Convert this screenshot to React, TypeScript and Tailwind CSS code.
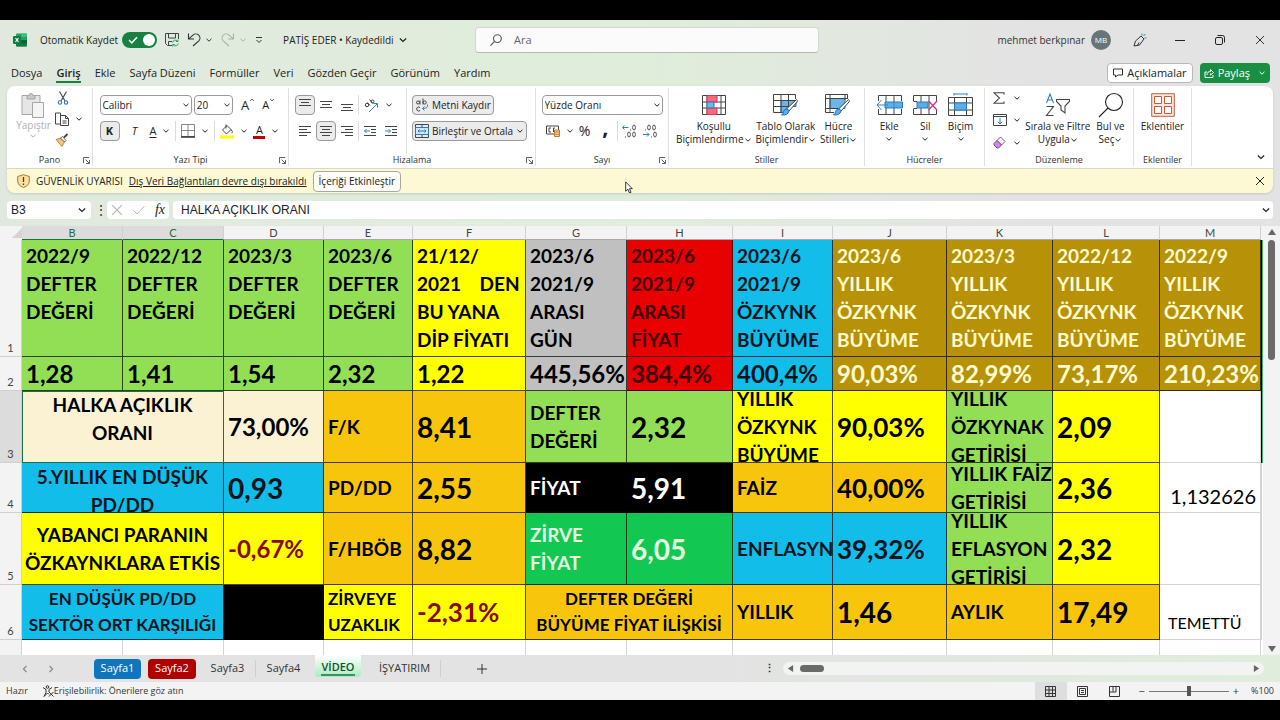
import React, { useState } from 'react';
import clsx from 'clsx';

type IconProps = { className?: string };

/* ---------- Icons ---------- */

const Chevron: React.FC<IconProps> = ({ className }) => (
  <svg viewBox="0 0 8 8" className={clsx('shrink-0 fill-none stroke-current', className ?? 'size-2')} strokeWidth="1">
    <path d="M1.500 2.800 4 5.200 6.500 2.800" />
  </svg>
);

const ExcelLogo = () => (
  <svg viewBox="0 0 14 14" className="size-3.5">
    <rect x="3" y="0.5" width="11" height="13" rx="1" fill="#21a366" />
    <path d="M3 7h11v5.500a1 1 0 0 1-1 1H4a1 1 0 0 1-1-1z" fill="#107c41" />
    <path d="M8.500 .500H13a1 1 0 0 1 1 1V4H8.500z" fill="#33c481" />
    <path d="M8.500 7H14v3.500H8.500z" fill="#185c37" />
    <rect x="0" y="3" width="8" height="8" rx="1" fill="#107c41" />
    <path d="M2.500 5 5.500 9M5.500 5 2.500 9" stroke="#fff" strokeWidth="1.100" />
  </svg>
);

const SaveIcon = () => (
  <svg viewBox="0 0 14 14" className="size-3.5 fill-none" stroke="#444" strokeWidth="1">
    <path d="M7 12.500H2.500L.500 10.500V.500h13V6M3.500 .500V5h7V.500M3.500 12.500V8.500H7" />
    <path d="M7.500 9.500a3 3 0 0 1 5-1.500M13 6.500v2h-2M13.300 10.500a3 3 0 0 1-5 1.500M7.700 13.500v-2h2" stroke="#2ea05c" />
  </svg>
);

const UndoIcon: React.FC<IconProps> = ({ className }) => (
  <svg viewBox="0 0 14 14" className={clsx('size-3.5 fill-none stroke-current', className)} strokeWidth="1.1">
    <path d="M1.500 .500V6H7M1.700 5.800 6 2.200A4 4 0 0 1 11.800 7.800L6 13" />
  </svg>
);

const SearchIcon: React.FC<IconProps> = ({ className }) => (
  <svg viewBox="0 0 26 26" className={clsx('shrink-0 fill-none stroke-current', className)} strokeWidth="1.1">
    <circle cx="16" cy="10" r="8.500" vectorEffect="non-scaling-stroke" />
    <path d="M10 16 1 25" vectorEffect="non-scaling-stroke" />
  </svg>
);

const PenIcon = () => (
  <svg viewBox="0 0 14 14" className="size-3.5 fill-none" stroke="#333" strokeWidth="1">
    <path d="M1 13 2.500 8 8 3l3 3-4.500 6zM4.500 12.500 6 9.500" />
    <path d="M9 2.500V.500M10.500 3 12.500 1M11.500 5h2" stroke="#2a8a8a" />
  </svg>
);

const CommentIcon = () => (
  <svg viewBox="0 0 10 10" className="size-2.5 fill-none" stroke="#333" strokeWidth="1">
    <path d="M.500 1h9v6H5L2.500 9V7h-2z" />
  </svg>
);

const ShareIcon = () => (
  <svg viewBox="0 0 10 10" className="size-2.5 fill-none" stroke="#fff" strokeWidth="1">
    <path d="M3 4H1v5.500h8V7M3 7c0-2.500 1.500-3.500 3.500-3.500V1.500L9.500 4.500 6.500 7V5.500" />
  </svg>
);

const PasteIcon = () => (
  <svg viewBox="0 0 24 26" className="h-[26px] w-6" fill="#e6e6e6" stroke="#a6a6a6">
    <path d="M1 3.500h18v19H1z" />
    <path d="M6 3.500h2a2 2 0 0 1 4 0h2V7H6z" fill="#c8c8c8" />
    <path d="M11.500 10.500h11v15h-11z" fill="#f4f4f4" />
  </svg>
);

const CutIcon = () => (
  <svg viewBox="0 0 12 14" className="h-3.5 w-3 fill-none" strokeWidth="1.1">
    <path d="M2.500 .500 8 10M9.500 .500 4 10" stroke="#444" />
    <circle cx="3" cy="11.500" r="1.700" stroke="#2b7cb3" />
    <circle cx="9" cy="11.500" r="1.700" stroke="#2b7cb3" />
  </svg>
);

const CopyIcon = () => (
  <svg viewBox="0 0 14 14" className="size-3.5 fill-white" stroke="#444">
    <path d="M.500 1h5v11h-5z" />
    <path d="M5.500 3.500h5l3 3v7h-8zM10.500 3.500v3h3M7.500 9h4M7.500 11h4" />
  </svg>
);

const BrushIcon = () => (
  <svg viewBox="0 0 14 14" className="size-3.5">
    <path d="M1 6.500 6 5l3.500 4L7 13.500z" fill="#f4c27c" stroke="#b5762a" strokeWidth=".8" />
    <path d="m5.500 5 2-1.500 3.500 4L9.500 9z" fill="#fff" stroke="#444" strokeWidth=".8" />
    <path d="m9 4.500 3.500-3.500" stroke="#444" strokeWidth="1.800" />
  </svg>
);

const BorderIcon = () => (
  <svg viewBox="0 0 14 14" className="size-3.5 fill-none" stroke="#888">
    <path d="M.500 .500h13v12H.500zM7 .500v12M.500 6.500h13" />
    <path d="M0 13h14" stroke="#333" strokeWidth="1.300" />
  </svg>
);

const FillIcon = () => (
  <svg viewBox="0 0 14 15" className="h-[15px] w-3.5 fill-none" stroke="#444">
    <path d="m2.500 6 4.500-4.500L11 5.500 6.500 10zM6 .500v4M11 5.500q2 2 1 3.500" />
    <path d="M0 13h14" stroke="#ffff00" strokeWidth="3" />
  </svg>
);

const Lines: React.FC<{ d: string }> = ({ d }) => (
  <svg viewBox="0 0 14 14" className="size-3.5" stroke="#444">
    <path d={d} />
  </svg>
);

const IndentIcon: React.FC<{ out?: boolean }> = ({ out }) => (
  <svg viewBox="0 0 14 14" className="size-3.5 fill-none" stroke="#444">
    <path d="M1 2.500h12M8 5.500h5M8 8.500h5M1 11.500h12" />
    <path d={out ? 'M7 7H1.500M3.500 5l-2 2 2 2' : 'M1 7h5.500M4.500 5l2 2-2 2'} stroke="#2b88b8" />
  </svg>
);

const OrientIcon = () => (
  <svg viewBox="0 0 15 15" className="size-[15px] fill-none" stroke="#444">
    <circle cx="3" cy="7" r="1.700" />
    <path d="M3.500 4.500 6 7.500M5.500 1.500 9 5.500" />
    <circle cx="8.500" cy="3.500" r="1.500" />
    <path d="M5 14 13 6M9.500 5.500H13.500V9.500" stroke="#2b88a8" />
  </svg>
);

const WrapIcon = () => (
  <svg viewBox="0 0 14 14" className="size-3.5 shrink-0 fill-none" stroke="#444">
    <circle cx="3" cy="4.500" r="1.500" />
    <path d="M5 2.500V6.500M8 .500v6" />
    <circle cx="9.700" cy="4.500" r="1.600" />
    <path d="M5 9.500a2 2 0 1 0 0 3" />
    <path d="M12.500 6.500q1 4-5 4M9.500 8.500l-2 2 2 2" stroke="#2b88b8" />
  </svg>
);

const MergeIcon = () => (
  <svg viewBox="0 0 14 14" className="size-3.5 shrink-0 fill-none">
    <path d="M.500 .500h13v13H.500zM7 .500V3M7 11v2.500" stroke="#444" />
    <path d="M.500 3.500h13v7H.500z" fill="#cfe8f7" stroke="#2b7cb3" />
    <path d="M3 7h8M4.500 5.500 3 7l1.500 1.500M9.500 5.500 11 7 9.500 8.500" stroke="#2b7cb3" />
  </svg>
);

const MoneyIcon = () => (
  <svg viewBox="0 0 14 12" className="h-3 w-3.5 fill-none">
    <path d="M.500 1h12v8H.500z" stroke="#444" />
    <path d="M5 3H3v4h2M9 3H7.500v4" stroke="#444" />
    <path d="M8.500 5h5v6.500h-5zM8.500 7h5M8.500 9.300h5" fill="#f8d2a8" stroke="#c87a2c" />
  </svg>
);

const DecimalIcon: React.FC<{ less?: boolean }> = ({ less }) => (
  <svg viewBox="0 0 14 14" className="size-3.5 fill-none" stroke="#555">
    {less ? (
      <>
        <path d="M2 6h1" />
        <ellipse cx="6" cy="3.500" rx="1.400" ry="2.500" />
        <ellipse cx="11" cy="3.500" rx="1.400" ry="2.500" />
        <path d="M8 13h1" />
        <ellipse cx="12" cy="10.500" rx="1.400" ry="2.500" />
        <path d="M0 10.500h6M4 8.500l2 2-2 2" stroke="#2b88b8" />
      </>
    ) : (
      <>
        <path d="M8 6h1" />
        <ellipse cx="12" cy="3.500" rx="1.400" ry="2.500" />
        <path d="M3 13h1" />
        <ellipse cx="7" cy="10.500" rx="1.400" ry="2.500" />
        <ellipse cx="12" cy="10.500" rx="1.400" ry="2.500" />
        <path d="M.500 3.500h6M2.500 1.500l-2 2 2 2" stroke="#2b88b8" />
      </>
    )}
  </svg>
);

const CondIcon = () => (
  <svg viewBox="0 0 24 20" className="h-5 w-6 fill-none" stroke="#444">
    <path d="M.500 .500h23v19H.500zM5 .500v19M19 .500v19M.500 7h23M.500 13h23" />
    <path d="M5 .500h10v6.500H5zM5 13h10v6.500H5z" fill="#f9687c" stroke="#d13a50" />
    <path d="M5 7h7v6H5z" fill="#6cb4ea" stroke="#2b7cb3" />
  </svg>
);

const Brush: React.FC = () => (
  <>
    <path d="M23.500 5.500q1.500 1 .500 2.500L16 17l-2.500-2z" fill="#fff" stroke="#444" />
    <path d="M13.500 15q2 0 2.500 2-1 4.500-7.500 4 2-1.500 2-3.500 1-2.500 3-2.500z" fill="#5aaef0" stroke="#1f6fb2" />
  </>
);

const TableIcon = () => (
  <svg viewBox="0 0 26 22" className="h-[22px] w-[26px] fill-none" stroke="#444">
    <path d="M8 6.500h15v6H8z" fill="#6cb4ea" stroke="#2b7cb3" />
    <path d="M8 12.500h6v6H8z" fill="#6cb4ea" stroke="#2b7cb3" />
    <path d="M9 18.500H.500V.500h22V5M8 .500v18M15.500 .500v12M.500 6.500h22M.500 12.500H16" />
    <Brush />
  </svg>
);

const CellStyleIcon = () => (
  <svg viewBox="0 0 26 22" className="h-[22px] w-[26px] fill-none" stroke="#444">
    <path d="M5 4.500h15v10H5z" fill="#6cb4ea" stroke="#2b7cb3" />
    <path d="M9 18.500H.500V.500h22V5M5 .500v18M.500 4.500h22M.500 14.500H13M20 .500V6" />
    <Brush />
  </svg>
);

const InsertIcon = () => (
  <svg viewBox="0 0 27 20" className="h-5 w-[27px] fill-none" stroke="#444">
    <path d="M2.500 6V.500h23V6M2.500 14v5.500h23V14M10 .500v19M18 .500v19" />
    <path d="M9 7h17.500v6H9z" fill="#5aaef0" stroke="#2b7cb3" />
    <path d="M18 7v6M12 10H1M5.500 5 1 10l4.500 5" stroke="#2b88b8" />
  </svg>
);

const DeleteIcon = () => (
  <svg viewBox="0 0 25 20" className="h-5 w-[25px] fill-none" stroke="#444">
    <path d="M.500 6V.500h23V6M.500 14v5.500h23V15M8 .500v19M16 .500v19M.500 6.500H4M.500 13.500H4" />
    <path d="M4 7h11v6H4z" fill="#5aaef0" stroke="#2b7cb3" />
    <path d="m15.500 6 8.500 9M24 6l-8.500 9" stroke="#d4327c" strokeWidth="1.300" />
  </svg>
);

const FormatIcon = () => (
  <svg viewBox="0 0 25 24" className="h-6 w-[25px] fill-none" stroke="#444">
    <path d="M6 1h13M6 0v2.500M19 0v2.500" stroke="#2b88b8" />
    <path d="M.500 4.500h24v18H.500zM6.500 4.500v18M18.500 4.500v18M.500 10h24M.500 17h24" />
    <path d="M6.500 10h12v7h-12z" fill="#5aaef0" stroke="#2b7cb3" />
  </svg>
);

const SumIcon = () => (
  <svg viewBox="0 0 12 12" className="size-3 fill-none" stroke="#444" strokeWidth="1.1">
    <path d="M11 2.500V.800H1L6.500 6 1 11.200h10V9.500" />
  </svg>
);

const FillDownIcon = () => (
  <svg viewBox="0 0 14 12" className="h-3 w-3.5 fill-none" stroke="#444">
    <path d="M.500 .500h13v11H.500zM.500 2.500h13" />
    <path d="M7 4v6M4.800 7.800 7 10l2.200-2.200" stroke="#2b88a8" />
  </svg>
);

const EraserIcon = () => (
  <svg viewBox="0 0 13 13" className="size-[13px]" stroke="#8a3aa0">
    <path d="M7.500 1 12 5.500 8.500 9 4 4.500z" fill="#fff" />
    <path d="M4 4.500 8.500 9 5.500 12H4L1 9V7.500z" fill="#d08be0" />
  </svg>
);

const SortIcon = () => (
  <svg viewBox="0 0 25 24" className="h-6 w-[25px] fill-none" strokeWidth="1.1">
    <path d="M1.500 10 5 1l3.500 9M2.700 7h4.600" stroke="#2b88b8" />
    <path d="M1.500 13.500h7l-7 9h7" stroke="#444" />
    <path d="M11.500 6.500h13v2L20 13v7l-4-3v-4l-4.500-4.500z" stroke="#444" />
  </svg>
);

const AddinsIcon = () => (
  <svg viewBox="0 0 24 24" className="size-6 fill-none" stroke="#c65a38">
    <path d="M.700 .700h22.600v22.600H.700z" fill="#fbe6df" />
    <path d="M3.500 3.500h7v7h-7zM13.500 3.500h7v7h-7zM3.500 13.500h7v7h-7zM13.500 13.500h7v7h-7z" fill="#fff" />
  </svg>
);

const ShieldIcon = () => (
  <svg viewBox="0 0 13 14" className="h-3.5 w-[13px]">
    <path d="M6.500 .700 12.300 2.500V7q0 4.500-5.800 6.500Q.700 11.500 .700 7V2.500z" fill="#ffdf9e" stroke="#b5762a" />
    <path d="M6.500 3v5M6.500 9.500V11" stroke="#5a3a10" strokeWidth="1.300" />
  </svg>
);

const LauncherIcon = () => (
  <svg viewBox="0 0 8 8" className="size-[7px] fill-none" stroke="#444">
    <path d="M.500 7V.500H7M3 3l4 4M7.500 3.500v4h-4" />
  </svg>
);

const CloseIcon: React.FC<IconProps> = ({ className }) => (
  <svg viewBox="0 0 10 10" className={clsx('fill-none stroke-current', className)}>
    <path d="m1 1 8 8M9 1 1 9" />
  </svg>
);

const CursorIcon = () => (
  <svg viewBox="0 0 8 13" className="h-[13px] w-2" fill="#fff" stroke="#222" strokeWidth=".9">
    <path d="M.700 .900v9.300l2.200-2 1.500 3.800 1.600-.7L4.500 7.700h2.800z" />
  </svg>
);

/* ---------- Ribbon pieces ---------- */

const Group: React.FC<{ label: string; className: string; launcher?: boolean; children: React.ReactNode }> = ({
  label,
  className,
  launcher,
  children,
}) => (
  <section aria-label={label} className={clsx('relative flex shrink-0 flex-col border-r border-[#e0e0e0]', className)}>
    <div className="flex flex-1 justify-center">{children}</div>
    <div className="text-center text-[9px] leading-3 text-[#333]">{label}</div>
    {launcher && (
      <button aria-label={`${label} ayarları`} className="absolute right-0.5 bottom-0.5">
        <LauncherIcon />
      </button>
    )}
  </section>
);

const Tool: React.FC<{ label: string; active?: boolean; drop?: boolean; children: React.ReactNode }> = ({
  label,
  active,
  drop,
  children,
}) => (
  <button
    aria-label={label}
    className={clsx(
      'flex h-5 shrink-0 items-center justify-center gap-1.5 rounded',
      !drop && 'w-5',
      active && 'border border-[#9a9a9a] bg-[#ebebeb]'
    )}
  >
    {children}
    {drop && <Chevron />}
  </button>
);

const BigTool: React.FC<{ icon: React.ReactNode; lines: string[]; drop?: 'inline' | 'below' }> = ({ icon, lines, drop }) => (
  <button className="flex shrink-0 flex-col items-center pt-1 text-[10px] leading-[13px] whitespace-nowrap">
    <span className="mb-0.5 flex h-[26px] items-center">{icon}</span>
    {lines.map((line, i) => (
      <span key={line} className="flex items-center">
        {line}
        {drop === 'inline' && i === lines.length - 1 && <Chevron />}
      </span>
    ))}
    {drop === 'below' && <Chevron className="mt-0.5 size-2" />}
  </button>
);

const Dropdown: React.FC<{ label: string; value: string; className: string }> = ({ label, value, className }) => (
  <div className={clsx('relative', className)}>
    <select
      aria-label={label}
      className="block h-5 w-full appearance-none rounded border border-[#9a9a9a] bg-white pl-0.5 text-[10px]"
    >
      <option>{value}</option>
    </select>
    <Chevron className="pointer-events-none absolute top-1.5 right-0.5 size-2" />
  </div>
);

const Sep = () => <span className="h-5 w-px bg-[#dcdcdc]" />;

const TABS = ['Dosya', 'Giriş', 'Ekle', 'Sayfa Düzeni', 'Formüller', 'Veri', 'Gözden Geçir', 'Görünüm', 'Yardım'];

const TitleBar = () => {
  const [autoSave, setAutoSave] = useState(true);
  return (
    <div className="grid h-10 grid-cols-[475fr_344fr_461fr] items-center text-[10px]">
      <div className="flex items-center pl-[13px] whitespace-nowrap">
        <ExcelLogo />
        <span id="autosave" className="mr-1 ml-[13px]">Otomatik Kaydet</span>
        <button
          role="switch"
          aria-checked={autoSave}
          aria-labelledby="autosave"
          onClick={() => setAutoSave(!autoSave)}
          className="flex h-4 w-[35px] items-center justify-between rounded-full bg-[#188142] px-0.5"
        >
          <svg viewBox="0 0 10 8" className="ml-1 h-2 w-2.5 fill-none" stroke="#fff" strokeWidth="1.5">
            <path d="M1 4 3.800 6.800 9 1.200" />
          </svg>
          <span className="size-3 rounded-full bg-white" />
        </button>
        <button aria-label="Kaydet" className="ml-2"><SaveIcon /></button>
        <button aria-label="Geri Al" className="ml-2 flex items-center gap-1 text-[#333]">
          <UndoIcon />
          <Chevron />
        </button>
        <button aria-label="Yinele" className="ml-2 flex items-center gap-1 text-[#aab0a8]">
          <UndoIcon className="-scale-x-100" />
          <Chevron />
        </button>
        <button aria-label="Hızlı Erişim" className="ml-2">
          <svg viewBox="0 0 8 8" className="size-2 fill-none" stroke="#333">
            <path d="M1 1.500h6M1.500 4 4 6.500 6.500 4" />
          </svg>
        </button>
        <button className="ml-5 flex items-center gap-1">
          PATİŞ EDER • Kaydedildi
          <Chevron className="size-2.5" />
        </button>
      </div>
      <label className="flex h-[26px] items-center gap-3 rounded border border-[#d2d6d0] border-b-[#b4b8b2] bg-[#fbfbfb] px-3.5 text-[#555]">
        <SearchIcon className="size-3" />
        <input aria-label="Ara" placeholder="Ara" className="w-full bg-transparent text-[11px] outline-none placeholder:text-[#666]" />
      </label>
      <div className="flex items-center justify-end pr-[15px] text-[#333]">
        <span className="mr-1.5">mehmet berkpınar</span>
        <span className="mr-[22px] flex size-5 items-center justify-center rounded-full bg-[#64767a] text-[8px] text-white">MB</span>
        <button aria-label="Yenilikler" className="mr-7"><PenIcon /></button>
        <button aria-label="Simge Durumuna Küçült" className="mr-[30px] flex h-4 w-2.5 items-center">
          <span className="h-px w-full bg-[#222]" />
        </button>
        <button aria-label="Önceki Boyut" className="mr-[30px]">
          <svg viewBox="0 0 10 10" className="size-2.5 fill-none" stroke="#222">
            <rect x=".500" y="2.500" width="7" height="7" rx="1.500" />
            <path d="M2.500 .500h5a2 2 0 0 1 2 2v5" />
          </svg>
        </button>
        <button aria-label="Kapat"><CloseIcon className="size-2.5" /></button>
      </div>
    </div>
  );
};

const TabRow = () => (
  <div className="flex h-[26px] items-center pr-2.5 pl-[11px] text-[11px]">
    <nav className="flex gap-3.5 pt-0.5">
      {TABS.map((tab) => (
        <a
          key={tab}
          href="#ribbon"
          className={clsx('border-b-2 leading-4', tab === 'Giriş' ? 'border-[#188142] font-semibold' : 'border-transparent')}
        >
          {tab}
        </a>
      ))}
    </nav>
    <button className="ml-auto flex h-5 items-center gap-1 rounded border border-[#b8b8b8] bg-white px-[5px]">
      <CommentIcon />
      Açıklamalar
    </button>
    <button className="ml-[7px] flex h-5 items-center gap-1 rounded bg-[#188f43] px-1 text-white">
      <ShareIcon />
      Paylaş
      <Chevron className="ml-1 size-2" />
    </button>
  </div>
);

const Ribbon = () => (
  <div id="ribbon" className="flex h-[82px] bg-white py-0.5">
    <Group label="Pano" launcher className="w-[86px]">
      <button className="flex flex-col items-center pt-1 pr-1 pl-1 text-[10px] leading-[14px] text-[#b0b0b0]">
        <PasteIcon />
        Yapıştır
        <Chevron />
      </button>
      <div className="flex w-8 flex-col items-start gap-[7px] pt-[3px]">
        <button aria-label="Kes" className="pl-0.5"><CutIcon /></button>
        <button aria-label="Kopyala" className="flex items-center gap-1.5"><CopyIcon /><Chevron /></button>
        <button aria-label="Biçim Boyacısı"><BrushIcon /></button>
      </div>
    </Group>

    <Group label="Yazı Tipi" launcher className="w-[196px]">
      <div className="flex w-[182px] flex-col gap-1.5 pt-[7px]">
        <div className="flex items-center gap-0.5">
          <Dropdown label="Yazı tipi" value="Calibri" className="w-24" />
          <Dropdown label="Yazı boyutu" value="20" className="w-[41px]" />
          <button aria-label="Büyüt" className="ml-1.5 flex w-5 text-[13px] leading-4">A<Chevron className="size-1.5 rotate-180" /></button>
          <button aria-label="Küçült" className="flex w-5 text-[11px] leading-4">A<Chevron className="size-1.5" /></button>
        </div>
        <div className="flex items-center gap-[5px]">
          <Tool label="Kalın" active><b className="text-[11px]">K</b></Tool>
          <Tool label="İtalik"><i className="text-[11px]">T</i></Tool>
          <Tool label="Altı Çizili" drop><span className="text-[11px] underline underline-offset-2">A</span></Tool>
          <Sep />
          <Tool label="Kenarlıklar" drop><BorderIcon /></Tool>
          <Sep />
          <Tool label="Dolgu Rengi" drop><FillIcon /></Tool>
          <Tool label="Yazı Rengi" drop>
            <span className="w-3 border-b-[3px] border-[#c00000] text-center text-[11px] leading-3">A</span>
          </Tool>
        </div>
      </div>
    </Group>

    <Group label="Hizalama" launcher className="w-[247px]">
      <div className="flex w-[118px] flex-col gap-1.5 border-r border-[#e0e0e0] pt-[7px] pl-1.5">
        <div className="flex items-center gap-px">
          <Tool label="Üste Hizala" active><Lines d="M1 1.500h12M3 4.500h8M1 7.500h12" /></Tool>
          <Tool label="Ortaya Hizala"><Lines d="M1 3.500h12M3 6.500h8M1 9.500h12" /></Tool>
          <Tool label="Alta Hizala"><Lines d="M1 6.500h12M3 9.500h8M1 12.500h12" /></Tool>
          <Sep />
          <span className="ml-1"><Tool label="Yönlendirme" drop><OrientIcon /></Tool></span>
        </div>
        <div className="flex items-center gap-px">
          <Tool label="Sola Hizala"><Lines d="M1 2.500h12M1 5.500h8M1 8.500h12M1 11.500h8" /></Tool>
          <Tool label="Ortala" active><Lines d="M1 2.500h12M3 5.500h8M1 8.500h12M3 11.500h8" /></Tool>
          <Tool label="Sağa Hizala"><Lines d="M1 2.500h12M5 5.500h8M1 8.500h12M5 11.500h8" /></Tool>
          <Sep />
          <Tool label="Girintiyi Azalt"><IndentIcon out /></Tool>
          <Tool label="Girintiyi Artır"><IndentIcon /></Tool>
        </div>
      </div>
      <div className="flex flex-1 flex-col items-start gap-1.5 pt-[7px] pl-[5px] text-[10px]">
        <button className="flex h-5 items-center gap-[3px] rounded border border-[#9a9a9a] bg-[#ebebeb] px-0.5 whitespace-nowrap">
          <WrapIcon />
          Metni Kaydır
        </button>
        <button className="flex h-5 items-center gap-[3px] rounded border border-[#9a9a9a] bg-[#ebebeb] px-0.5 whitespace-nowrap">
          <MergeIcon />
          Birleştir ve Ortala
          <Chevron />
        </button>
      </div>
    </Group>

    <Group label="Sayı" launcher className="w-[133px]">
      <div className="flex w-[121px] flex-col gap-1.5 pt-[7px]">
        <Dropdown label="Sayı biçimi" value="Yüzde Oranı" className="w-full" />
        <div className="flex items-center gap-px pl-1">
          <Tool label="Finansal" drop><MoneyIcon /></Tool>
          <Tool label="Yüzde"><span className="text-sm">%</span></Tool>
          <Tool label="Virgül"><b className="pb-2.5 text-[22px] leading-3">,</b></Tool>
          <Sep />
          <Tool label="Ondalık Artır"><DecimalIcon /></Tool>
          <Tool label="Ondalık Azalt"><DecimalIcon less /></Tool>
        </div>
      </div>
    </Group>

    <Group label="Stiller" className="w-[196px]">
      <div className="flex gap-1">
        <BigTool icon={<CondIcon />} lines={['Koşullu', 'Biçimlendirme']} drop="inline" />
        <BigTool icon={<TableIcon />} lines={['Tablo Olarak', 'Biçimlendir']} drop="inline" />
        <BigTool icon={<CellStyleIcon />} lines={['Hücre', 'Stilleri']} drop="inline" />
      </div>
    </Group>

    <Group label="Hücreler" className="w-[120px]">
      <div className="flex gap-2.5">
        <BigTool icon={<InsertIcon />} lines={['Ekle']} drop="below" />
        <BigTool icon={<DeleteIcon />} lines={['Sil']} drop="below" />
        <BigTool icon={<FormatIcon />} lines={['Biçim']} drop="below" />
      </div>
    </Group>

    <Group label="Düzenleme" className="w-[149px]">
      <div className="flex w-8 flex-col gap-2.5 pt-1">
        <button aria-label="Otomatik Toplam" className="flex items-center gap-2"><SumIcon /><Chevron /></button>
        <button aria-label="Dolgu" className="flex items-center gap-1.5"><FillDownIcon /><Chevron /></button>
        <button aria-label="Temizle" className="flex items-center gap-[7px]"><EraserIcon /><Chevron /></button>
      </div>
      <div className="flex gap-1.5">
        <BigTool icon={<SortIcon />} lines={['Sırala ve Filtre', 'Uygula']} drop="inline" />
        <BigTool icon={<SearchIcon className="size-[26px]" />} lines={['Bul ve', 'Seç']} drop="inline" />
      </div>
    </Group>

    <Group label="Eklentiler" className="w-[58px]">
      <BigTool icon={<AddinsIcon />} lines={['Eklentiler']} />
    </Group>

    <button aria-label="Şeridi Daralt" className="mt-auto mr-[7px] mb-1 ml-auto">
      <Chevron className="size-2.5" />
    </button>
  </div>
);

const WarningBar = () => (
  <div role="alert" className="relative flex h-[25px] items-center border-t border-[#d8d8c8] bg-[#fdf9d4] pr-2 pl-2.5 text-[10px]">
    <ShieldIcon />
    <span className="ml-1.5">GÜVENLİK UYARISI</span>
    <a href="#links" className="ml-1.5 underline">Dış Veri Bağlantıları devre dışı bırakıldı</a>
    <button className="ml-1.5 h-[21px] rounded border border-[#a8a8a0] bg-[#fffef6] px-[5px]">İçeriği Etkinleştir</button>
    <button aria-label="Uyarıyı kapat" className="ml-auto"><CloseIcon className="size-2.5" /></button>
    <span className="absolute top-3 left-[48.8%]"><CursorIcon /></span>
  </div>
);

const FormulaBar = () => (
  <div className="mt-2 mb-[7px] flex h-[18px] items-center px-[7px] font-['Liberation_Sans',sans-serif] text-xs">
    <div className="flex h-full w-[84px] items-center justify-between rounded-sm bg-white px-1">
      <input aria-label="Ad kutusu" defaultValue="B3" className="w-12 outline-none" />
      <Chevron className="size-2.5" />
    </div>
    <span className="mx-1 w-2 text-center">⋮</span>
    <div className="flex h-full w-[62px] items-center justify-between rounded-sm bg-white px-1">
      <button aria-label="İptal" className="text-[#b8b8b8]"><CloseIcon className="size-3" /></button>
      <button aria-label="Gir" className="text-[#b8b8b8]">
        <svg viewBox="0 0 12 10" className="h-2.5 w-3 fill-none stroke-current"><path d="M.500 5.500 4 9l7.500-8" /></svg>
      </button>
      <button aria-label="İşlev Ekle" className="font-['Liberation_Serif',serif] text-sm italic">fx</button>
    </div>
    <div className="ml-1 flex h-full flex-1 items-center rounded-sm bg-white pr-0.5 pl-2">
      <input aria-label="Formül çubuğu" defaultValue="HALKA AÇIKLIK ORANI" className="flex-1 outline-none" />
      <Chevron className="size-2.5" />
    </div>
  </div>
);

/* ---------- Sheet ---------- */

const GREEN = 'bg-[#92df55] text-black';
const YELLOW = 'bg-[#ffff00] text-black';
const YELLOW_RED = 'bg-[#ffff00] text-[#860a00]';
const BLUE = 'bg-[#12bdea] text-[#04141c]';
const GOLD = 'bg-[#b79209] text-[#fffbd0]';
const ORANGE = 'bg-[#f7c60c] text-black';
const CREAM = 'bg-[#fbf2d4] text-black';
const BLACK = 'bg-black text-white';
const EMERALD = 'bg-[#12c853] text-[#e4fbe0]';
const PLAIN = 'bg-white text-black';

const S = 'text-[17px] leading-[26px] font-bold';
const M = 'text-[19px] leading-7 font-bold';
const L = 'text-2xl leading-8 font-bold';
const XL = 'text-[26px] leading-8 font-bold';
const XXL = 'text-[28px] leading-8 font-bold';

type CellData = { t: string; c: string; f: string; span?: number; top?: boolean; extra?: string };

const cell = (t: string, c: string, f: string, rest: Partial<CellData> = {}): CellData => ({ t, c, f, ...rest });

const ROWS: { h: string; cells: CellData[] }[] = [
  {
    h: 'h-[116px] pt-0.5',
    cells: [
      cell('2022/9\nDEFTER\nDEĞERİ', GREEN, M, { top: true }),
      cell('2022/12\nDEFTER\nDEĞERİ', GREEN, M, { top: true }),
      cell('2023/3\nDEFTER\nDEĞERİ', GREEN, M, { top: true }),
      cell('2023/6\nDEFTER\nDEĞERİ', GREEN, M, { top: true }),
      cell('21/12/\n2021\u00a0\u00a0\u00a0\u00a0DEN\nBU YANA\nDİP FİYATI', YELLOW, M, { top: true }),
      cell('2023/6\n2021/9\nARASI\nGÜN', 'bg-[#c0c0c0] text-black', M, { top: true }),
      cell('2023/6\n2021/9\nARASI\nFİYAT', 'bg-[#e90000] text-[#3c0000]', M, { top: true }),
      cell('2023/6\n2021/9\nÖZKYNK\nBÜYÜME', BLUE, M, { top: true }),
      cell('2023/6\nYILLIK\nÖZKYNK\nBÜYÜME', GOLD, M, { top: true }),
      cell('2023/3\nYILLIK\nÖZKYNK\nBÜYÜME', GOLD, M, { top: true }),
      cell('2022/12\nYILLIK\nÖZKYNK\nBÜYÜME', GOLD, M, { top: true }),
      cell('2022/9\nYILLIK\nÖZKYNK\nBÜYÜME', GOLD, M, { top: true }),
    ],
  },
  {
    h: 'h-[33px]',
    cells: [
      cell('1,28', GREEN, L),
      cell('1,41', GREEN, L),
      cell('1,54', GREEN, L),
      cell('2,32', GREEN, L),
      cell('1,22', YELLOW, L),
      cell('445,56%', 'bg-[#c0c0c0] text-black', L),
      cell('384,4%', 'bg-[#e90000] text-[#3c0000]', L),
      cell('400,4%', BLUE, L),
      cell('90,03%', GOLD, L),
      cell('82,99%', GOLD, L),
      cell('73,17%', GOLD, L),
      cell('210,23%', GOLD, L),
    ],
  },
  {
    h: 'h-[71px]',
    cells: [
      cell('HALKA AÇIKLIK\nORANI', CREAM, M, { span: 2, top: true, extra: 'outline outline-[#1d7044] -outline-offset-1' }),
      cell('73,00%', CREAM, L),
      cell('F/K', ORANGE, M),
      cell('8,41', ORANGE, XXL),
      cell('DEFTER\nDEĞERİ', GREEN, M),
      cell('2,32', GREEN, XXL),
      cell('YILLIK\nÖZKYNK\nBÜYÜME', YELLOW, M),
      cell('90,03%', YELLOW, XL),
      cell('YILLIK\nÖZKYNAK\nGETİRİSİ', GREEN, M),
      cell('2,09', YELLOW, XXL),
      cell('', PLAIN, M),
    ],
  },
  {
    h: 'h-[49px]',
    cells: [
      cell('5.YILLIK EN DÜŞÜK\nPD/DD', BLUE, M, { span: 2, top: true }),
      cell('0,93', BLUE, XXL),
      cell('PD/DD', ORANGE, M),
      cell('2,55', ORANGE, XXL),
      cell('FİYAT', BLACK, M),
      cell('5,91', BLACK, XXL),
      cell('FAİZ', ORANGE, M),
      cell('40,00%', ORANGE, XL),
      cell('YILLIK FAİZ\nGETİRİSİ', GREEN, M),
      cell('2,36', YELLOW, XXL),
      cell('1,132626', PLAIN, 'text-xl leading-8 self-end ml-auto pr-1'),
    ],
  },
  {
    h: 'h-[71px]',
    cells: [
      cell('YABANCI PARANIN\nÖZKAYNKLARA ETKİS', YELLOW, M, { span: 2 }),
      cell('-0,67%', YELLOW_RED, L),
      cell('F/HBÖB', ORANGE, M),
      cell('8,82', ORANGE, XXL),
      cell('ZİRVE\nFİYAT', EMERALD, M),
      cell('6,05', EMERALD, XXL),
      cell('ENFLASYN', BLUE, M),
      cell('39,32%', BLUE, XL),
      cell('YILLIK\nEFLASYON\nGETİRİSİ', GREEN, M),
      cell('2,32', YELLOW, XXL),
      cell('', PLAIN, M),
    ],
  },
  {
    h: 'h-[54px]',
    cells: [
      cell('EN DÜŞÜK PD/DD\nSEKTÖR ORT KARŞILIĞI', BLUE, S, { span: 2 }),
      cell('', BLACK, M),
      cell('ZİRVEYE\nUZAKLIK', YELLOW, S),
      cell('-2,31%', YELLOW_RED, XL),
      cell('DEFTER DEĞERİ\nBÜYÜME FİYAT İLİŞKİSİ', ORANGE, S, { span: 2 }),
      cell('YILLIK', ORANGE, M),
      cell('1,46', ORANGE, XXL),
      cell('AYLIK', ORANGE, M),
      cell('17,49', ORANGE, XXL),
      cell('TEMETTÜ', PLAIN, 'text-base leading-8 self-end pl-1'),
    ],
  },
];

const COLUMNS = [
  { name: 'B', w: 'w-[101px]' },
  { name: 'C', w: 'w-[101px]' },
  { name: 'D', w: 'w-[100px]' },
  { name: 'E', w: 'w-[89px]' },
  { name: 'F', w: 'w-[113px]' },
  { name: 'G', w: 'w-[101px]' },
  { name: 'H', w: 'w-[106px]' },
  { name: 'I', w: 'w-[100px]' },
  { name: 'J', w: 'w-[114px]' },
  { name: 'K', w: 'w-[106px]' },
  { name: 'L', w: 'w-[107px]' },
  { name: 'M', w: 'w-[101px]' },
];

const Sheet = () => (
  <div className="flex bg-white">
    <table className="w-full flex-1 table-fixed border-separate border-spacing-0 font-[Lato,sans-serif]">
      <colgroup>
        <col className="w-[22px]" />
        {COLUMNS.map((col) => (
          <col key={col.name} className={col.w} />
        ))}
        <col className="w-[2px]" />
      </colgroup>
      <thead>
        <tr className="h-3.5 bg-[#f3f3f3] text-[11px] leading-[13px] text-[#444]">
          <th className="p-0">
            <svg viewBox="0 0 10 10" className="ml-auto size-2.5" fill="#d4d4d4"><path d="M10 0v10H0z" /></svg>
          </th>
          {COLUMNS.map((col) => (
            <th
              key={col.name}
              scope="col"
              className={clsx(
                'border-r border-b border-r-[#d0d0d0] p-0 font-normal',
                col.name === 'B' || col.name === 'C' ? 'border-b-[#1d7044] bg-[#dcdcdc] text-[#1d7044]' : 'border-b-[#a8a8a8]'
              )}
            >
              {col.name}
            </th>
          ))}
          <th className="p-0" />
        </tr>
      </thead>
      <tbody>
        {ROWS.map((row, r) => (
          <tr key={r}>
            <th
              scope="row"
              className={clsx(
                'border-r border-b border-[#d0d0d0] p-0 align-bottom text-[11px] leading-4 font-normal text-[#444]',
                r === 2 ? 'bg-[#dcdcdc]' : 'bg-[#f3f3f3]'
              )}
            >
              {r + 1}
            </th>
            {row.cells.map((item, i) => (
              <td
                key={i}
                colSpan={item.span}
                className={clsx(
                  'border-r border-b p-0',
                  item.c === PLAIN ? 'border-[#d4d4d4]' : 'border-black/70',
                  item.c,
                  item.extra
                )}
              >
                <div
                  className={clsx(
                    'flex overflow-hidden whitespace-pre',
                    row.h,
                    item.top ? 'items-start' : 'items-center',
                    item.span ? 'justify-center text-center' : 'pl-1'
                  )}
                >
                  <span className={item.f}>{item.t}</span>
                </div>
              </td>
            ))}
            <td className={clsx('border-l p-0', r < 3 ? 'border-black bg-[#3fae6a]' : 'border-[#d4d4d4]')} />
          </tr>
        ))}
        <tr className="h-[15px]">
          <th className="border-r border-[#d0d0d0] bg-[#f3f3f3] p-0" />
          {COLUMNS.map((col) => (
            <td key={col.name} className="border-r border-[#d4d4d4] p-0" />
          ))}
          <td className="p-0" />
        </tr>
      </tbody>
    </table>
    <div className="flex w-[17px] shrink-0 flex-col items-center gap-1 bg-[#f3f3f3] py-0.5 text-[#666]">
      <svg viewBox="0 0 8 8" className="size-2 fill-current"><path d="M4 1l4 6H0z" /></svg>
      <div className="h-[120px] w-[7px] rounded-full bg-[#6a6a6a]" />
      <svg viewBox="0 0 8 8" className="mt-auto size-2 fill-current"><path d="M4 7l4-6H0z" /></svg>
    </div>
  </div>
);

/* ---------- Bottom bars ---------- */

const SheetTabs = () => (
  <div className="flex h-[27px] items-center bg-gradient-to-r from-[#e3e3e3] from-55% to-[#e0eddc] text-[11px] text-[#333]">
    <button aria-label="Önceki sayfa" className="ml-5 text-[#888]"><Chevron className="size-2.5 rotate-90" /></button>
    <button aria-label="Sonraki sayfa" className="ml-4 text-[#888]"><Chevron className="size-2.5 -rotate-90" /></button>
    <button className="ml-[38px] h-5 w-[47px] rounded bg-[#0f75bc] text-white">Sayfa1</button>
    <button className="ml-[7px] h-5 w-12 rounded bg-[#b00000] text-white">Sayfa2</button>
    <button className="w-[60px] border-r border-[#cfcfcf] pl-1">Sayfa3</button>
    <button className="w-[59px] pr-1">Sayfa4</button>
    <button className="flex h-[22px] w-[46px] items-start justify-center self-start rounded-b bg-gradient-to-b from-white to-[#a6ecc0] font-semibold text-[#14532d]">
      <span className="border-b-2 border-[#3f8f62] pt-1 leading-[15px]">VİDEO</span>
    </button>
    <button className="w-20 border-r border-[#cfcfcf] pl-2">İŞYATIRIM</button>
    <button aria-label="Yeni sayfa" className="ml-9">
      <svg viewBox="0 0 10 10" className="size-2.5" stroke="#333"><path d="M5 0v10M0 5h10" /></svg>
    </button>
    <div className="ml-auto flex w-[40%] items-center gap-2">
      <span className="-ml-1 font-bold">⋮</span>
      <div className="mr-4 flex h-[13px] flex-1 items-center gap-1.5 rounded-full bg-[#f3f3f3] px-1 text-[#666]">
        <svg viewBox="0 0 8 8" className="size-[7px] fill-current"><path d="M1 4l6-4v8z" /></svg>
        <div className="h-[7px] w-6 rounded-full bg-[#6a6a6a]" />
        <svg viewBox="0 0 8 8" className="ml-auto size-[7px] fill-current"><path d="M7 4 1 0v8z" /></svg>
      </div>
    </div>
  </div>
);

const StatusBar = () => (
  <footer className="flex h-[18px] items-center bg-[#f3f3f3] px-1.5 text-[9px] text-[#333]">
    <span>Hazır</span>
    <button className="ml-3.5 flex items-center">
      <svg viewBox="0 0 12 12" className="size-3 fill-none" stroke="#333">
        <circle cx="5.500" cy="2" r="1.300" />
        <path d="M1 2.500 4 4.500v3L2 11.500 5.500 8 7 9.500M10 2.500 7 4.500V7M7 7l4.500 4.500M11.500 7 7 11.500" />
      </svg>
      Erişilebilirlik: Önerilere göz atın
    </button>
    <button aria-label="Normal" className="ml-auto flex h-full w-8 items-center justify-center bg-[#dedede]">
      <svg viewBox="0 0 11 11" className="size-[11px] fill-none" stroke="#333"><path d="M.500 .500h10v10H.500zM4 .500v10M7.500 .500v10M.500 4h10M.500 7.500h10" /></svg>
    </button>
    <button aria-label="Sayfa Düzeni" className="flex w-8 justify-center">
      <svg viewBox="0 0 11 11" className="size-[11px] fill-none" stroke="#333"><path d="M.500 .500h10v10H.500zM2.500 2.500h6v6h-6zM4 4.500h3M4 6.500h3" /></svg>
    </button>
    <button aria-label="Sayfa Sonu Önizleme" className="flex w-8 justify-center">
      <svg viewBox="0 0 11 11" className="size-[11px] fill-none" stroke="#333"><path d="M.500 .500h10v10H.500zM4 .500v5M.500 6h6.500M7 .500V6" /></svg>
    </button>
    <button aria-label="Uzaklaştır" className="ml-2 text-[11px]">−</button>
    <input
      type="range"
      aria-label="Yakınlaştırma"
      min={0}
      max={100}
      defaultValue={50}
      className="mx-1 h-px w-20 appearance-none bg-[#777] [&::-webkit-slider-thumb]:h-2.5 [&::-webkit-slider-thumb]:w-1 [&::-webkit-slider-thumb]:appearance-none [&::-webkit-slider-thumb]:bg-[#555]"
    />
    <button aria-label="Yakınlaştır" className="text-[11px]">+</button>
    <span className="ml-3">%100</span>
  </footer>
);

const App: React.FC = () => (
  <div className="min-h-screen bg-black py-5 font-['Open_Sans',sans-serif] text-[#222]">
    <main className="bg-gradient-to-r from-[#e1e9df] via-[#e0eddb] via-50% to-[#e3e3e3] to-80%">
      <TitleBar />
      <TabRow />
      <div className="mx-[7px] overflow-hidden rounded-lg shadow">
        <Ribbon />
        <WarningBar />
      </div>
      <FormulaBar />
      <Sheet />
      <SheetTabs />
      <StatusBar />
    </main>
  </div>
);

export default App;
